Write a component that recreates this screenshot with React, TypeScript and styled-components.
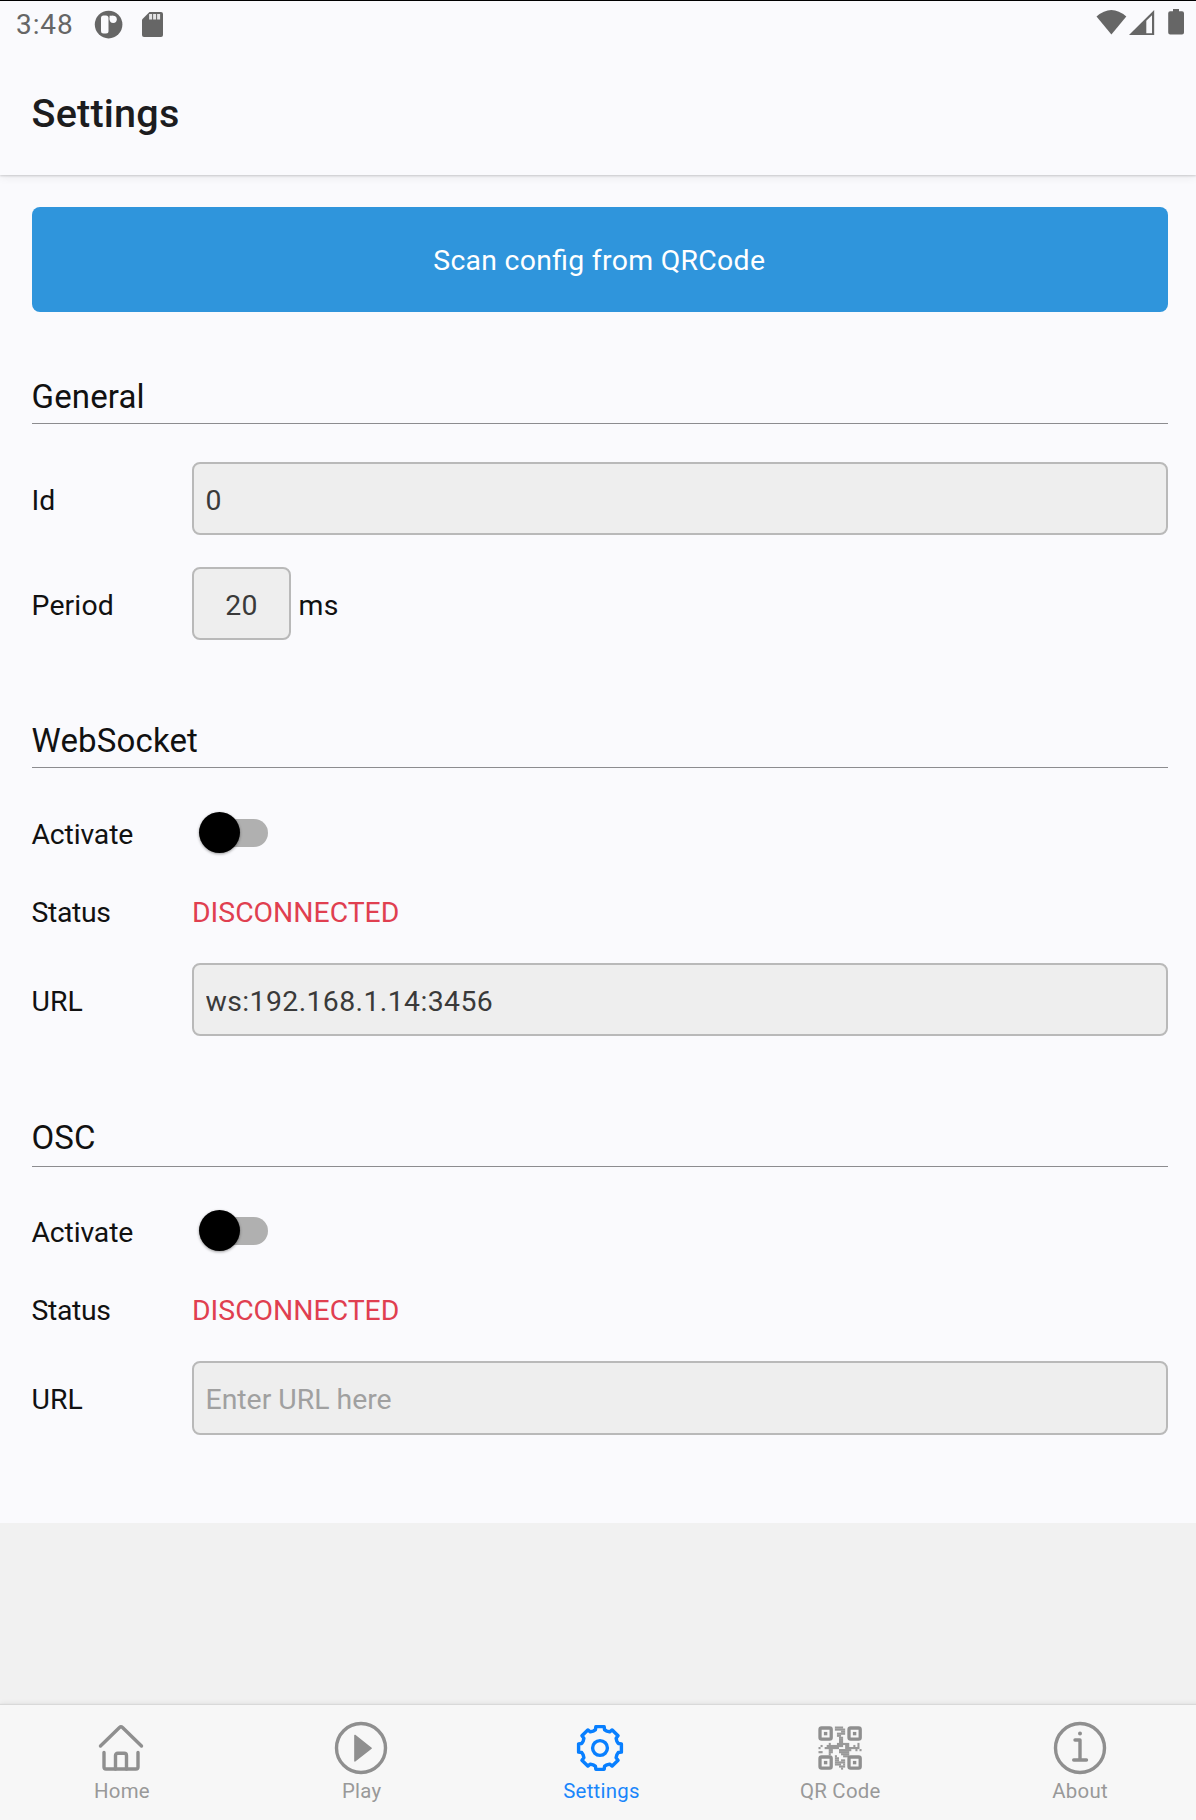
import React, { useState } from "react";
import styled, { createGlobalStyle } from "styled-components";

const GlobalStyle = createGlobalStyle`
  * { box-sizing: border-box; }
  body { margin: 0; background: #f1f1f1; font-family: Roboto, "Liberation Sans", sans-serif; }
`;

const Screen = styled.div`
  display: flex;
  flex-direction: column;
  width: 1196px;
  height: 1820px;
  overflow: hidden;
  background: #f1f1f1;
`;

const Header = styled.header`
  display: flex;
  flex-direction: column;
  flex: none;
  height: 175px;
  background: #fafafd;
  border-top: 1px solid #000;
  box-shadow: 0 1px 2px rgba(0, 0, 0, 0.16), 0 2px 9px rgba(0, 0, 0, 0.07);
  z-index: 1;
`;

const StatusBar = styled.div`
  display: flex;
  justify-content: space-between;
  height: 46px;
  padding: 8px 12px 0 16px;
`;

const StatusGroup = styled.div`
  display: flex;
  align-items: flex-start;
`;

const Clock = styled.span`
  width: 77px;
  font-size: 28px;
  line-height: 31px;
  letter-spacing: 0.9px;
  color: #666;
`;

const Title = styled.h1`
  margin: 43px 0 0 31.5px;
  font-size: 39.6px;
  line-height: 48px;
  font-weight: 500;
  letter-spacing: 0.2px;
  color: #1c1c1e;
`;

const Content = styled.main`
  flex: none;
  height: 1348px;
  padding: 32px 28px 0 31.5px;
  background: #fafafd;
`;

const ScanButton = styled.button`
  display: block;
  width: 100%;
  height: 105px;
  padding: 3px 1px 0 0;
  border: 0;
  border-radius: 8px;
  background: #2f95dc;
  color: #fff;
  font: 400 28.4px/34px Roboto, sans-serif;
  letter-spacing: 0.3px;
  font-feature-settings: "liga" 1;
`;

const Section = styled.section<{ $top: number }>`
  padding-top: ${(p) => p.$top}px;
`;

const SectionTitle = styled.h2<{ $line: number }>`
  margin: 0;
  height: 46px;
  border-bottom: 1px solid #8c8c8f;
  font-size: 33px;
  line-height: ${(p) => p.$line}px;
  font-weight: 400;
  letter-spacing: 0.15px;
  color: #111;
`;

const Row = styled.div<{ $top: number; $height: number }>`
  display: flex;
  align-items: center;
  height: ${(p) => p.$height}px;
  margin-top: ${(p) => p.$top}px;
`;

const Label = styled.label<{ $spacing?: number }>`
  width: 160.5px;
  flex: none;
  padding-top: 4px;
  font-size: 28.4px;
  line-height: 34px;
  letter-spacing: ${(p) => p.$spacing ?? 0}px;
  color: #111;
`;

const Input = styled.input<{ $small?: boolean }>`
  flex: ${(p) => (p.$small ? "none" : "1")};
  width: ${(p) => (p.$small ? "99px" : "auto")};
  min-width: 0;
  height: 100%;
  padding: 3px ${(p) => (p.$small ? "0" : "11.5px")} 0;
  border: 2px solid #b9b9b9;
  border-radius: 8px;
  background: #eee;
  color: #3a3a3a;
  font: 400 28.4px/34px Roboto, sans-serif;
  letter-spacing: 0.4px;
  text-align: ${(p) => (p.$small ? "center" : "left")};
  outline: none;
  &::placeholder { color: #a0a0a0; opacity: 1; letter-spacing: 0; }
`;

const Unit = styled.span`
  padding: 4px 0 0 7.5px;
  font-size: 28.4px;
  line-height: 34px;
  letter-spacing: 0.4px;
  color: #111;
`;

const Status = styled.span`
  padding-top: 3px;
  font-size: 28.35px;
  line-height: 34px;
  color: #e03f50;
`;

const Track = styled.button<{ $on: boolean }>`
  display: flex;
  align-items: center;
  justify-content: ${(p) => (p.$on ? "flex-end" : "flex-start")};
  width: 62px;
  height: 28px;
  margin: 0 0 0 14px;
  padding: 0;
  border: 0;
  border-radius: 14px;
  background: #b0b0b0;
`;

const Thumb = styled.span`
  flex: none;
  width: 41px;
  height: 41px;
  margin: 0 -7.5px;
  border-radius: 50%;
  background: #000;
  box-shadow: 0 1px 3px rgba(0, 0, 0, 0.4);
`;

const TabBar = styled.nav`
  display: flex;
  flex: none;
  width: 1200px;
  height: 115px;
  margin-top: auto;
  padding-left: 1px;
  background: #f7f7f7;
  box-shadow: 0 -1px 1px #d9d9d9, 0 -2px 5px rgba(0, 0, 0, 0.06);
`;

const Tab = styled.a<{ $active?: boolean }>`
  display: flex;
  flex: 1;
  flex-direction: column;
  align-items: center;
  padding-top: 13px;
  color: ${(p) => (p.$active ? "#087fff" : "#8f8f8f")};
`;

const TabLabel = styled.span<{ $active?: boolean; $shift: number }>`
  margin: 1px 0 0 ${(p) => p.$shift}px;
  white-space: nowrap;
  font-size: 20.4px;
  line-height: 24px;
  letter-spacing: 0.25px;
  color: ${(p) => (p.$active ? "#1a86fb" : "#999")};
`;

const Icon = styled.svg`
  display: block;
  flex: none;
`;

const LineIcon: React.FC<{ children: React.ReactNode }> = ({ children }) => (
  <Icon width="60" height="60" viewBox="-30 -30 60 60" fill="none" stroke="currentColor"
    strokeWidth="3.4" strokeLinecap="round" strokeLinejoin="round">
    {children}
  </Icon>
);

const gearPath = () => {
  const pts: string[] = [];
  const shape: [number, number][] = [[-11, 21.8], [11, 21.8], [14, 18.8], [22.5, 18.2], [31, 18.8]];
  for (let i = 0; i < 8; i++) {
    shape.forEach(([deg, r]) => {
      const a = ((i * 45 + deg) * Math.PI) / 180;
      pts.push(`${(r * Math.sin(a)).toFixed(2)} ${(-r * Math.cos(a)).toFixed(2)}`);
    });
  }
  return `M${pts.join("L")}Z`;
};

const HomeIcon = () => (
  <LineIcon>
    <path d="M-20.5-2L-1.5-20.5Q0-22 1.5-20.5L20.5-2" />
    <path d="M-17 4.5V19Q-17 21 -15 21H15Q17 21 17 19V4.5" />
    <path d="M-5.5 21V7.5Q-5.5 5.3 -3.3 5.3H3.3Q5.5 5.3 5.5 7.5V21" />
  </LineIcon>
);

const PlayIcon = () => (
  <LineIcon>
    <circle r="24.5" />
    <path d="M-6.1-12.6V13L10.2 0.2Z" fill="currentColor" strokeWidth="1.4" />
  </LineIcon>
);

const GearIcon = () => (
  <LineIcon>
    <path d={gearPath()} strokeWidth="3.4" />
    <circle r="7.4" strokeWidth="3.4" />
  </LineIcon>
);

const InfoIcon = () => (
  <LineIcon>
    <circle r="24.5" />
    <circle cy="-14.6" r="2" fill="currentColor" stroke="none" />
    <path d="M-5-8H0V12M-6.3 12H6.5" />
  </LineIcon>
);

const QR_ROWS = [
  "........####.........",
  "........#####........",
  "...........##........",
  ".........####........",
  ".........##..........",
  "..........##.........",
  "..........##.........",
  "..........##.........",
  ".....#...######....#.",
  ".#..########.##..#.#.",
  "#..#######...#######.",
  ".....##...######..#.#",
  "##...##...#####......",
  ".....#.....####......",
  "........#...###......",
  "........##...........",
  "........##.##........",
  "........#####........",
  "........###.#........",
  "..........###........",
  "...........#.........",
];

const FINDERS = [
  [-20, -20],
  [9, -20],
  [-20, 9],
  [9, 9],
];

const QrIcon = () => (
  <Icon width="60" height="60" viewBox="-30 -30 60 60">
    <g fill="none" stroke="currentColor" strokeWidth="3.3">
      {FINDERS.map(([x, y]) => (
        <g key={`${x},${y}`}>
          <rect x={x} y={y} width="11.2" height="11.2" rx="1.6" />
          <rect x={x + 3.9} y={y + 3.9} width="3.4" height="3.4" fill="currentColor" stroke="none" />
        </g>
      ))}
    </g>
    <g fill="currentColor" opacity="0.9">
      {QR_ROWS.flatMap((row, y) =>
        Array.from(row.matchAll(/#+/g)).map((run) => (
          <rect
            key={`${run.index}-${y}`}
            x={-21.5 + (run.index ?? 0) * 2.05}
            y={-21.5 + y * 2.05}
            width={run[0].length * 2.05}
            height="2.15"
          />
        ))
      )}
    </g>
  </Icon>
);

const AppBadgeIcon = () => (
  <Icon width="48.5" height="32" viewBox="0 0 48.5 32">
    <circle cx="15.6" cy="15.6" r="13.8" fill="#666" />
    <rect x="8" y="6.5" width="7.5" height="18" rx="2.5" fill="#fafafd" />
    <circle cx="20.2" cy="10.3" r="3.6" fill="#fafafd" />
    <path d="M16.6 6.7H20.2V10.3H16.6Z" fill="#fafafd" />
  </Icon>
);

const SdCardIcon = () => (
  <Icon width="22" height="32" viewBox="0 0 22 32">
    <path d="M7.5 3H19Q21 3 21 5V26Q21 28 19 28H2Q0 28 0 26V10.5Z" fill="#666" />
    <path d="M8.6 5V10.4M12.6 5V10.4M16.6 5V10.4" stroke="#e4e4e6" strokeWidth="3" />
  </Icon>
);

const DeviceIcons = () => (
  <Icon width="88" height="32" viewBox="1096 9 88 32" fill="#666">
    <path d="M1096.5 16.5Q1111.4 3.5 1126.3 16.5L1111.4 34.6Z" />
    <path d="M1129 35L1154.2 10V35Z" />
    <path d="M1146.3 20.8L1152 15.3V33.2H1146.3Z" fill="#fafafd" />
    <path d="M1173 9H1179V11.3H1182Q1184 11.3 1184 13.3V32.5Q1184 34.5 1182 34.5H1170.2Q1168.2 34.5 1168.2 32.5V13.3Q1168.2 11.3 1170.2 11.3H1173Z" />
  </Icon>
);

const Switch: React.FC<{ label: string }> = ({ label }) => {
  const [on, setOn] = useState(false);
  return (
    <Track type="button" role="switch" aria-label={label} aria-checked={on} $on={on} onClick={() => setOn(!on)}>
      <Thumb />
    </Track>
  );
};

interface ConnectionProps {
  name: string;
  url: string;
  top: number;
  titleLine: number;
  firstTop: number;
  inputHeight: number;
}

const Connection: React.FC<ConnectionProps> = ({ name, url, top, titleLine, firstTop, inputHeight }) => (
  <Section $top={top}>
    <SectionTitle $line={titleLine}>{name}</SectionTitle>
    <Row $top={firstTop} $height={41}>
      <Label $spacing={-0.15}>Activate</Label>
      <Switch label={name} />
    </Row>
    <Row $top={40} $height={36}>
      <Label $spacing={-0.35}>Status</Label>
      <Status>DISCONNECTED</Status>
    </Row>
    <Row $top={34} $height={inputHeight}>
      <Label>URL</Label>
      <Input defaultValue={url} placeholder="Enter URL here" />
    </Row>
  </Section>
);

const TABS = [
  { name: "Home", icon: <HomeIcon />, shift: 2 },
  { name: "Play", icon: <PlayIcon />, shift: 2 },
  { name: "Settings", icon: <GearIcon />, active: true, shift: 2 },
  { name: "QR Code", icon: <QrIcon />, shift: 0 },
  { name: "About", icon: <InfoIcon />, shift: 0 },
];

export default function App() {
  return (
    <Screen>
      <GlobalStyle />
      <Header>
        <StatusBar>
          <StatusGroup>
            <Clock>3:48</Clock>
            <AppBadgeIcon />
            <SdCardIcon />
          </StatusGroup>
          <DeviceIcons />
        </StatusBar>
        <Title>Settings</Title>
      </Header>
      <Content>
        <ScanButton type="button">Scan config from QRCode</ScanButton>
        <Section $top={66}>
          <SectionTitle $line={38}>General</SectionTitle>
          <Row $top={38} $height={73}>
            <Label>Id</Label>
            <Input defaultValue="0" />
          </Row>
          <Row $top={32} $height={73}>
            <Label $spacing={0.15}>Period</Label>
            <Input $small defaultValue="20" />
            <Unit>ms</Unit>
          </Row>
        </Section>
        <Connection name="WebSocket" url="ws:192.168.1.14:3456" top={82} titleLine={37} firstTop={44} inputHeight={73} />
        <Connection name="OSC" url="" top={85} titleLine={33} firstTop={43} inputHeight={74} />
      </Content>
      <TabBar>
        {TABS.map((t) => (
          <Tab key={t.name} $active={t.active}>
            {t.icon}
            <TabLabel $active={t.active} $shift={t.shift}>{t.name}</TabLabel>
          </Tab>
        ))}
      </TabBar>
    </Screen>
  );
}
